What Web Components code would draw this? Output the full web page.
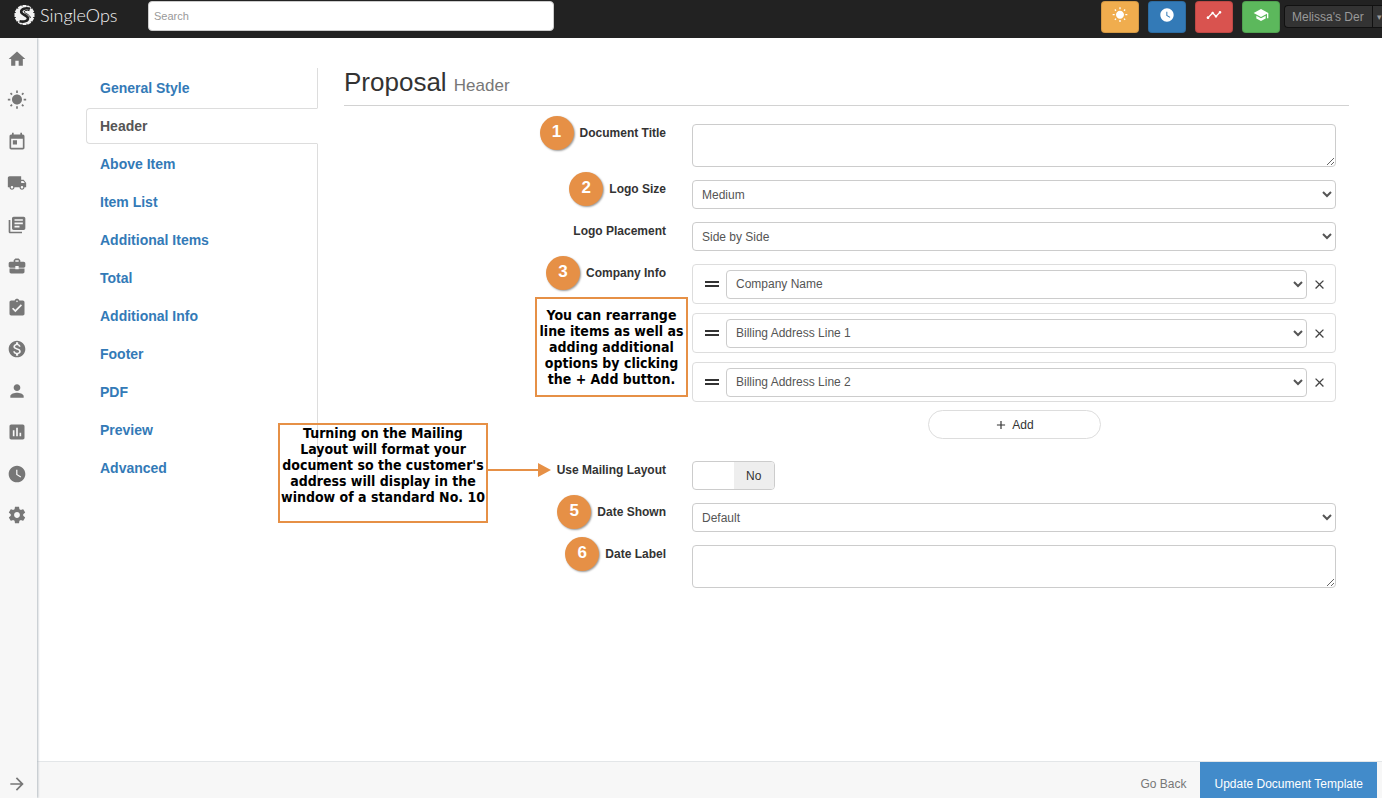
<!DOCTYPE html>
<html lang="en">
<head>
<meta charset="utf-8">
<title>SingleOps - Proposal Header</title>
<style>
    body {
        margin: 0;
        height: 100vh;
        display: flex;
        flex-direction: column;
        background: #fff;
        color: #333;
        font: 12px/16px "Liberation Sans", Arial, sans-serif;
    }
    .shell {
        flex: 1;
        min-height: 0;
        display: flex;
    }
    .page {
        flex: 1;
        min-width: 0;
        display: flex;
        flex-direction: column;
    }
    .content {
        flex: 1;
        min-height: 0;
        display: grid;
        grid-template-columns: 232px 1fr;
        gap: 26px;
        align-items: start;
        padding: 30px 33px 0 49px;
    }
</style>
</head>
<body>
    <top-bar></top-bar>
    <div class="shell">
        <side-bar></side-bar>
        <div class="page">
            <main class="content">
                <section-nav>
                    <section-link>General Style</section-link>
                    <section-link active>Header</section-link>
                    <section-link>Above Item</section-link>
                    <section-link>Item List</section-link>
                    <section-link>Additional Items</section-link>
                    <section-link>Total</section-link>
                    <section-link>Additional Info</section-link>
                    <section-link>Footer</section-link>
                    <section-link>PDF</section-link>
                    <section-link>Preview</section-link>
                    <section-link>Advanced</section-link>
                </section-nav>
                <proposal-form></proposal-form>
            </main>
            <action-bar></action-bar>
        </div>
    </div>

<script>
const ICONS = {
    home: 'M10 20v-6h4v6h5v-8h3L12 3 2 12h3v8z',
    sun: 'M6.76 4.84l-1.8-1.79-1.41 1.41 1.79 1.79 1.42-1.41zM4 10.5H1v2h3v-2zm9-9.95h-2V3.5h2V.55zm7.45 3.91l-1.41-1.41-1.79 1.79 1.41 1.41 1.79-1.79zm-3.21 13.7l1.79 1.8 1.41-1.41-1.8-1.79-1.4 1.4zM20 10.5v2h3v-2h-3zm-8-5c-3.31 0-6 2.69-6 6s2.69 6 6 6 6-2.69 6-6-2.69-6-6-6zm-1 16.95h2V19.5h-2v2.95zm-7.45-3.91l1.41 1.41 1.79-1.8-1.41-1.41-1.79 1.8z',
    calendar: 'M19 3h-1V1h-2v2H8V1H6v2H5c-1.11 0-1.99.9-1.99 2L3 19c0 1.1.89 2 2 2h14c1.1 0 2-.9 2-2V5c0-1.1-.9-2-2-2zm0 16H5V8h14v11zM7 10h5v5H7z',
    truck: 'M20 8h-3V4H3c-1.1 0-2 .9-2 2v11h2c0 1.66 1.34 3 3 3s3-1.34 3-3h6c0 1.66 1.34 3 3 3s3-1.34 3-3h2v-5l-3-4zM6 18.5c-.83 0-1.5-.67-1.5-1.5s.67-1.5 1.5-1.5 1.5.67 1.5 1.5-.67 1.5-1.5 1.5zm13.5-9l1.96 2.5H17V9.5h2.5zm-1.5 9c-.83 0-1.5-.67-1.5-1.5s.67-1.5 1.5-1.5 1.5.67 1.5 1.5-.67 1.5-1.5 1.5z',
    library: 'M4 6H2v14c0 1.1.9 2 2 2h14v-2H4V6zm16-4H8c-1.1 0-2 .9-2 2v12c0 1.1.9 2 2 2h12c1.1 0 2-.9 2-2V4c0-1.1-.9-2-2-2zm-1 9H9V9h10v2zm-4 4H9v-2h6v2zm4-8H9V5h10v2z',
    briefcase: 'M10 16v-1H3.01L3 19c0 1.11.89 2 2 2h14c1.11 0 2-.89 2-2v-4h-7v1h-4zm10-9h-4.01V5l-2-2h-4l-2 2v2H4c-1.1 0-2 .9-2 2v3c0 1.11.89 2 2 2h6v-2h4v2h6c1.1 0 2-.9 2-2V9c0-1.1-.9-2-2-2zm-6 0h-4V5h4v2z',
    clipboard: 'M19 3h-4.18C14.4 1.84 13.3 1 12 1c-1.3 0-2.4.84-2.82 2H5c-1.1 0-2 .9-2 2v14c0 1.1.9 2 2 2h14c1.1 0 2-.9 2-2V5c0-1.1-.9-2-2-2zm-7 0c.55 0 1 .45 1 1s-.45 1-1 1-1-.45-1-1 .45-1 1-1zm-2 14l-4-4 1.41-1.41L10 14.17l6.59-6.59L18 9l-8 8z',
    money: 'M12 2C6.48 2 2 6.48 2 12s4.48 10 10 10 10-4.48 10-10S17.52 2 12 2zm1.41 16.09V20h-2.67v-1.93c-1.71-.36-3.16-1.46-3.27-3.4h1.96c.1 1.05.82 1.87 2.65 1.87 1.96 0 2.4-.98 2.4-1.59 0-.83-.44-1.61-2.67-2.14-2.48-.6-4.18-1.62-4.18-3.67 0-1.72 1.39-2.84 3.11-3.21V4h2.67v1.95c1.86.45 2.79 1.86 2.85 3.39H14.3c-.05-1.11-.64-1.87-2.22-1.87-1.5 0-2.4.68-2.4 1.64 0 .84.65 1.39 2.67 1.91s4.18 1.39 4.18 3.91c-.01 1.83-1.38 2.83-3.12 3.16z',
    person: 'M12 12c2.21 0 4-1.79 4-4s-1.79-4-4-4-4 1.79-4 4 1.79 4 4 4zm0 2c-2.67 0-8 1.34-8 4v2h16v-2c0-2.66-5.33-4-8-4z',
    chart: 'M19 3H5c-1.1 0-2 .9-2 2v14c0 1.1.9 2 2 2h14c1.1 0 2-.9 2-2V5c0-1.1-.9-2-2-2zM9 17H7v-7h2v7zm4 0h-2V7h2v10zm4 0h-2v-4h2v4z',
    clock: 'M12 2C6.5 2 2 6.5 2 12s4.5 10 10 10 10-4.5 10-10S17.5 2 12 2zm4.2 14.2L11 13V7h1.5v5.2l4.5 2.7-.8 1.3z',
    gear: 'M19.43 12.98c.04-.32.07-.64.07-.98s-.03-.66-.07-.98l2.11-1.65c.19-.15.24-.42.12-.64l-2-3.46c-.12-.22-.39-.3-.61-.22l-2.49 1c-.52-.4-1.08-.73-1.69-.98l-.38-2.65C14.46 2.18 14.25 2 14 2h-4c-.25 0-.46.18-.49.42l-.38 2.65c-.61.25-1.17.59-1.69.98l-2.49-1c-.23-.09-.49 0-.61.22l-2 3.46c-.13.22-.07.49.12.64l2.11 1.65c-.04.32-.07.65-.07.98s.03.66.07.98l-2.11 1.65c-.19.15-.24.42-.12.64l2 3.46c.12.22.39.3.61.22l2.49-1c.52.4 1.08.73 1.69.98l.38 2.65c.03.24.24.42.49.42h4c.25 0 .46-.18.49-.42l.38-2.65c.61-.25 1.17-.59 1.69-.98l2.49 1c.23.09.49 0 .61-.22l2-3.46c.12-.22.07-.49-.12-.64l-2.11-1.65zM12 15.5c-1.93 0-3.5-1.57-3.5-3.5s1.57-3.5 3.5-3.5 3.5 1.57 3.5 3.5-1.57 3.5-3.5 3.5z',
    arrow: 'M12 4l-1.41 1.41L16.17 11H4v2h12.17l-5.58 5.59L12 20l8-8z',
    timeline: 'M23 8c0 1.1-.9 2-2 2-.18 0-.35-.02-.51-.07l-3.56 3.55c.05.16.07.34.07.52 0 1.1-.9 2-2 2s-2-.9-2-2c0-.18.02-.36.07-.52l-2.55-2.55c-.16.05-.34.07-.52.07s-.36-.02-.52-.07l-4.55 4.56c.05.16.07.33.07.51 0 1.1-.9 2-2 2s-2-.9-2-2 .9-2 2-2c.18 0 .35.02.51.07l4.56-4.55C8.02 9.36 8 9.18 8 9c0-1.1.9-2 2-2s2 .9 2 2c0 .18-.02.36-.07.52l2.55 2.55c.16-.05.34-.07.52-.07s.36.02.52.07l3.55-3.56C19.02 8.35 19 8.18 19 8c0-1.1.9-2 2-2s2 .9 2 2z',
    school: 'M5 13.18v4L12 21l7-3.82v-4L12 17l-7-3.82zM12 3L1 9l11 6 9-4.91V17h2V9L12 3z',
    close: 'M19 6.41L17.59 5 12 10.59 6.41 5 5 6.41 10.59 12 5 17.59 6.41 19 12 13.41 17.59 19 19 17.59 13.41 12z',
    plus: 'M19 13h-6v6h-2v-6H5v-2h6V5h2v6h6v2z'
};

class SvgIcon extends HTMLElement {
    constructor() {
        super();
        const shadow = this.attachShadow({ mode: 'open' });
        shadow.innerHTML = `
        <style>
            :host {
                display: block;
                width: 20px;
                height: 20px;
            }
            svg {
                display: block;
                width: 100%;
                height: 100%;
                fill: currentColor;
            }
        </style>
        <svg viewBox="0 0 24 24" aria-hidden="true"><path d="${ICONS[this.getAttribute('name')]}"/></svg>
    `;
    }
}

class BrandLogo extends HTMLElement {
    constructor() {
        super();
        const shadow = this.attachShadow({ mode: 'open' });

        // gear teeth round the disc
        let teeth = '';
        for (let i = 0; i < 12; i++) {
            teeth += `<rect x="9.5" y="0" width="4" height="4" transform="rotate(${i * 30} 11.5 10)"/>`;
        }

        shadow.innerHTML = `
        <style>
            :host {
                display: block;
            }
            a {
                display: flex;
                align-items: center;
                gap: 4px;
                color: #f2f2f2;
                font: 300 18px/20px Lato, sans-serif;
                text-decoration: none;
            }
            svg {
                width: 23px;
                height: 20px;
            }
        </style>
        <a href="#">
            <svg viewBox="0 0 23 20" aria-hidden="true">
                <g fill="#f2f2f2">${teeth}<circle cx="11.5" cy="10" r="9"/></g>
                <path d="M17 3.800C12.500 2.500 8.200 4 8.200 6.800c0 3.200 6.800 3.200 6.800 6.600 0 2.400-3.600 3.900-8.500 2.800" fill="none" stroke="#222" stroke-width="2.600"/>
                <path d="M16.500 5.600c-3-.8-5.200-.1-5.200 1.200 0 1.600 6 2.600 6 6.200" fill="none" stroke="#222" stroke-width="1"/>
            </svg>
            <span>SingleOps</span>
        </a>
    `;
    }
}

class TopBar extends HTMLElement {
    constructor() {
        super();
        const shadow = this.attachShadow({ mode: 'open' });
        shadow.innerHTML = `
        <style>
            :host {
                display: flex;
                align-items: flex-start;
                flex: none;
                height: 38px;
                background: #222;
                z-index: 2;
            }
            brand-logo {
                flex: none;
                width: 135px;
                padding: 5px 0 0 13px;
                box-sizing: border-box;
            }
            input {
                box-sizing: border-box;
                flex: 0 1 406px;
                min-width: 120px;
                height: 30px;
                margin: 1px auto 0 13px;
                padding: 0 5px;
                border: 1px solid #ccc;
                border-radius: 4px;
                font: 11px "Liberation Sans", Arial, sans-serif;
            }
            input::placeholder {
                color: #999;
            }
            .shortcuts {
                display: flex;
                gap: 9px;
                padding-top: 1px;
                margin-right: 4px;
            }
            .shortcuts button {
                display: flex;
                justify-content: center;
                width: 38px;
                height: 32px;
                padding: 5px 0 0;
                border: 1px solid rgba(0, 0, 0, 0.12);
                border-radius: 4px;
                color: #fff;
            }
            .shortcuts svg-icon {
                width: 16px;
                height: 16px;
            }
            .account {
                display: flex;
                align-items: stretch;
                width: 98px;
                height: 23px;
                margin-top: 5px;
                padding: 0;
                overflow: hidden;
                border: 1px solid #111;
                border-right: 0;
                border-radius: 4px 0 0 4px;
                background: #333;
                color: #999;
                font: 12px/22px "Liberation Sans", Arial, sans-serif;
            }
            .account span {
                flex: 1;
                text-align: left;
                padding-left: 7px;
                white-space: nowrap;
            }
            .account i {
                width: 10px;
                padding-left: 4px;
                box-sizing: border-box;
                border-left: 1px solid #111;
                font-size: 9px;
                font-style: normal;
            }
        </style>
        <brand-logo></brand-logo>
        <input type="search" placeholder="Search" aria-label="Search">
        <div class="shortcuts">
            <button type="button" aria-label="Day view" style="background: #f0ad4e"><svg-icon name="sun"></svg-icon></button>
            <button type="button" aria-label="Time clock" style="background: #337ab7"><svg-icon name="clock"></svg-icon></button>
            <button type="button" aria-label="Activity" style="background: #d9534f"><svg-icon name="timeline"></svg-icon></button>
            <button type="button" aria-label="Training" style="background: #5cb85c"><svg-icon name="school"></svg-icon></button>
        </div>
        <button class="account" type="button"><span>Melissa's Der</span><i>▾</i></button>
    `;
    }
}

class SideBar extends HTMLElement {
    constructor() {
        super();
        const shadow = this.attachShadow({ mode: 'open' });
        const items = ['home', 'sun', 'calendar', 'truck', 'library', 'briefcase', 'clipboard', 'money', 'person', 'chart', 'clock', 'gear'];
        shadow.innerHTML = `
        <style>
            :host {
                display: flex;
                flex-direction: column;
                justify-content: space-between;
                flex: none;
                width: 37px;
                background: #f7f7f7;
                box-shadow: 1px 0 2px #b4bcc2;
                z-index: 1;
            }
            nav {
                display: grid;
                grid-auto-rows: 1fr;
                height: 498px;
            }
            a {
                display: grid;
                place-items: center;
                padding-right: 3px;
                color: #777;
            }
            .expand {
                padding-bottom: 4px;
            }
        </style>
        <nav>
            ${items.map(name => `<a href="#" aria-label="${name}"><svg-icon name="${name}"></svg-icon></a>`).join('')}
        </nav>
        <a class="expand" href="#" aria-label="expand"><svg-icon name="arrow"></svg-icon></a>
    `;
    }
}

class SectionNav extends HTMLElement {
    constructor() {
        super();
        const shadow = this.attachShadow({ mode: 'open' });
        shadow.innerHTML = `
        <style>
            :host {
                display: block;
                box-sizing: border-box;
                border-right: 1px solid #ddd;
            }
            nav {
                display: flex;
                flex-direction: column;
                gap: 2px;
                padding-top: 2px;
            }
        </style>
        <nav><slot></slot></nav>
    `;
    }
}

class SectionLink extends HTMLElement {
    constructor() {
        super();
        const shadow = this.attachShadow({ mode: 'open' });
        shadow.innerHTML = `
        <style>
            :host {
                display: block;
            }
            a {
                display: block;
                padding: 9px 13px;
                border: 1px solid transparent;
                color: #337ab7;
                font-size: 14px;
                font-weight: 700;
                text-decoration: none;
            }
            :host([active]) {
                margin-right: -1px;
            }
            :host([active]) a {
                border-color: #ddd;
                border-right-color: #fff;
                border-radius: 4px 0 0 4px;
                background: #fff;
                color: #555;
            }
        </style>
        <a href="#"><slot></slot></a>
    `;
    }
}

// label on the left, control on the right
class FormRow extends HTMLElement {
    constructor() {
        super();
        const shadow = this.attachShadow({ mode: 'open' });
        const step = this.getAttribute('step');
        shadow.innerHTML = `
        <style>
            :host {
                display: grid;
                grid-template-columns: 1fr 2fr;
                column-gap: 26px;
                align-items: start;
            }
            .caption {
                position: relative;
                display: flex;
                justify-content: flex-end;
                align-items: center;
                gap: 6px;
                height: 17px;
                font-weight: 700;
            }
            .step {
                flex: none;
                width: 34px;
                height: 34px;
                border-radius: 50%;
                background: #e69046;
                box-shadow: 1px 1px 2px rgba(0, 0, 0, 0.4);
                color: #fff;
                font-size: 17px;
                line-height: 32px;
                text-align: center;
            }
        </style>
        <div class="caption">
            ${step ? `<span class="step">${step}</span>` : ''}
            <slot name="label"></slot>
            <slot name="note"></slot>
        </div>
        <div><slot></slot></div>
    `;
    }
}

class CalloutNote extends HTMLElement {
    constructor() {
        super();
        const shadow = this.attachShadow({ mode: 'open' });
        shadow.innerHTML = `
        <style>
            :host {
                display: block;
                position: absolute;
                box-sizing: border-box;
                border: 2px solid #e69046;
                color: #000;
                font: bold 14px/16px "DejaVu Sans Condensed", "DejaVu Sans", sans-serif;
                text-align: center;
            }
            svg {
                display: none;
                position: absolute;
                left: 100%;
                top: 38px;
                width: 65px;
                height: 14px;
            }
            :host([arrow]) svg {
                display: block;
            }
        </style>
        <slot></slot>
        <svg viewBox="0 0 65 14" fill="#e69046" aria-hidden="true"><path d="M0 6h52V0l13 7-13 7V8H0z"/></svg>
    `;
    }
}

class InfoLine extends HTMLElement {
    constructor() {
        super();
        const shadow = this.attachShadow({ mode: 'open' });
        shadow.innerHTML = `
        <style>
            :host {
                display: flex;
                align-items: center;
                box-sizing: border-box;
                height: 40px;
                padding-left: 12px;
                border: 1px solid #ddd;
                border-radius: 4px;
            }
            .handle {
                width: 14px;
                height: 2px;
                margin-right: 7px;
                border: solid #333;
                border-width: 2px 0;
                cursor: move;
            }
            .field {
                flex: 1;
                min-width: 0;
            }
            button {
                display: grid;
                place-items: center;
                width: 28px;
                height: 28px;
                padding: 0 4px 0 0;
                border: 0;
                background: none;
                color: #444;
            }
            svg-icon {
                width: 15px;
                height: 15px;
            }
        </style>
        <span class="handle"></span>
        <div class="field"><slot></slot></div>
        <button type="button" aria-label="Remove"><svg-icon name="close"></svg-icon></button>
    `;
    }
}

class ProposalForm extends HTMLElement {
    constructor() {
        super();
        const shadow = this.attachShadow({ mode: 'open' });
        shadow.innerHTML = `
        <style>
            :host {
                display: block;
                min-width: 0;
            }
            h1 {
                margin: 0 0 18px;
                padding-bottom: 5px;
                border-bottom: 1px solid #d2d2d2;
                font-size: 26px;
                font-weight: 400;
                line-height: 28px;
            }
            h1 small {
                color: #777;
                font-size: 17px;
            }
            form {
                display: flex;
                flex-direction: column;
                gap: 13px;
                padding-right: 13px;
            }
            select, textarea {
                display: block;
                box-sizing: border-box;
                width: 100%;
                border: 1px solid #ccc;
                border-radius: 4px;
                background: #fff;
                color: #555;
                font: 12px/16px "Liberation Sans", Arial, sans-serif;
            }
            select {
                height: 29px;
                padding: 0 5px;
            }
            textarea {
                height: 43px;
                padding: 6px 9px;
                resize: vertical;
            }
            info-line + info-line {
                margin-top: 9px;
            }
            .add {
                display: flex;
                align-items: center;
                justify-content: center;
                gap: 4px;
                width: 173px;
                height: 29px;
                margin: 8px auto 9px;
                border: 1px solid #ddd;
                border-radius: 15px;
                background: #fff;
                color: #333;
                font: 12px/16px "Liberation Sans", Arial, sans-serif;
            }
            .add svg-icon {
                width: 14px;
                height: 14px;
            }
            .toggle {
                display: inline-flex;
                vertical-align: top;
                box-sizing: border-box;
                width: 83px;
                height: 29px;
                overflow: hidden;
                border: 1px solid #ccc;
                border-radius: 4px;
                line-height: 28px;
            }
            .toggle input {
                appearance: none;
                flex: 1;
                margin: 0;
            }
            .toggle span {
                flex: 1;
                background: #eee;
                text-align: center;
            }
            .rearrange {
                top: 33px;
                right: -22px;
                width: 153px;
                height: 100px;
                padding-top: 8px;
            }
            .mailing {
                top: -38px;
                right: 178px;
                width: 210px;
                height: 100px;
            }
        </style>
        <h1>Proposal <small>Header</small></h1>
        <form>
            <form-row step="1">
                <label slot="label" for="title">Document Title</label>
                <textarea id="title"></textarea>
            </form-row>
            <form-row step="2">
                <label slot="label" for="logo-size">Logo Size</label>
                <select id="logo-size"><option>Medium</option></select>
            </form-row>
            <form-row>
                <label slot="label" for="logo-placement">Logo Placement</label>
                <select id="logo-placement"><option>Side by Side</option></select>
            </form-row>
            <form-row step="3">
                <label slot="label" for="info-1">Company Info</label>
                <callout-note slot="note" class="rearrange">You can rearrange line items as well as adding additional options by clicking the + Add button.</callout-note>
                <info-line><select id="info-1"><option>Company Name</option></select></info-line>
                <info-line><select aria-label="Company info line 2"><option>Billing Address Line 1</option></select></info-line>
                <info-line><select aria-label="Company info line 3"><option>Billing Address Line 2</option></select></info-line>
                <button class="add" type="button"><svg-icon name="plus"></svg-icon>Add</button>
            </form-row>
            <form-row>
                <label slot="label" for="mailing">Use Mailing Layout</label>
                <callout-note slot="note" class="mailing" arrow>Turning on the Mailing Layout will format your document so the customer's address will display in the window of a standard No. 10</callout-note>
                <label class="toggle"><input id="mailing" type="checkbox"><span>No</span></label>
            </form-row>
            <form-row step="5">
                <label slot="label" for="date-shown">Date Shown</label>
                <select id="date-shown"><option>Default</option></select>
            </form-row>
            <form-row step="6">
                <label slot="label" for="date-label">Date Label</label>
                <textarea id="date-label"></textarea>
            </form-row>
        </form>
    `;
    }
}

class ActionBar extends HTMLElement {
    constructor() {
        super();
        const shadow = this.attachShadow({ mode: 'open' });
        shadow.innerHTML = `
        <style>
            :host {
                display: flex;
                justify-content: flex-end;
                flex: none;
                height: 36px;
                padding-right: 5px;
                border-top: 1px solid #e3e6e8;
                background: #f7f7f7;
            }
            a, button {
                padding: 7px 14px 0;
                font: 12px/30px "Liberation Sans", Arial, sans-serif;
            }
            a {
                color: #777;
                text-decoration: none;
            }
            button {
                border: 0;
                background: #428bca;
                color: #fff;
            }
        </style>
        <a href="#">Go Back</a>
        <button type="button">Update Document Template</button>
    `;
    }
}

customElements.define('svg-icon', SvgIcon);
customElements.define('brand-logo', BrandLogo);
customElements.define('top-bar', TopBar);
customElements.define('side-bar', SideBar);
customElements.define('section-nav', SectionNav);
customElements.define('section-link', SectionLink);
customElements.define('form-row', FormRow);
customElements.define('callout-note', CalloutNote);
customElements.define('info-line', InfoLine);
customElements.define('proposal-form', ProposalForm);
customElements.define('action-bar', ActionBar);
</script>
</body>
</html>
